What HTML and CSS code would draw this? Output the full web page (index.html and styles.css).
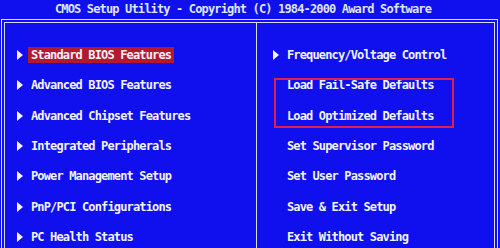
FILE: index.html
```html
<!DOCTYPE html>
<html>
<head>
    <meta charset="UTF-8">
    <title>CMOS Setup Utility</title>
    <link rel="stylesheet" href="styles.css">
</head>
<body>
    <div class="title">CMOS Setup Utility - Copyright (C) 1984-2000 Award Software</div>
    <div class="frame">
        <div class="panel">
            <ul class="menu left">
                <li class="item sub selected"><span class="label">Standard BIOS Features</span></li>
                <li class="item sub"><span class="label">Advanced BIOS Features</span></li>
                <li class="item sub"><span class="label">Advanced Chipset Features</span></li>
                <li class="item sub"><span class="label">Integrated Peripherals</span></li>
                <li class="item sub"><span class="label">Power Management Setup</span></li>
                <li class="item sub"><span class="label">PnP/PCI Configurations</span></li>
                <li class="item sub"><span class="label">PC Health Status</span></li>
            </ul>
            <ul class="menu right">
                <li class="item sub"><span class="label">Frequency/Voltage Control</span></li>
                <li class="item"><span class="label">Load Fail-Safe Defaults</span></li>
                <li class="item"><span class="label">Load Optimized Defaults</span></li>
                <li class="item"><span class="label">Set Supervisor Password</span></li>
                <li class="item"><span class="label">Set User Password</span></li>
                <li class="item"><span class="label">Save &amp; Exit Setup</span></li>
                <li class="item"><span class="label">Exit Without Saving</span></li>
                <li class="mark"></li>
            </ul>
        </div>
    </div>
</body>
</html>
```

FILE: styles.css
```css
body {
    margin: 0;
    padding: 0;
    background: #1010ee;
    color: #f2f2ff;
    font-family: "DejaVu Sans Mono", "Liberation Mono", monospace;
    font-weight: bold;
    font-size: 12px;
    letter-spacing: -0.85px;
    overflow: hidden;
}

.title {
    height: 19px;
    line-height: 19px;
    padding-right: 14px;
    text-align: center;
    color: #dfe4ff;
    white-space: nowrap;
}

.frame {
    width: 497px;
    height: 280px;
    margin-left: 1px;
    box-sizing: border-box;
    border: 1px solid #d6dcff;
    padding: 2px;
}

.panel {
    height: 100%;
    box-sizing: border-box;
    border: 1px solid #d6dcff;
    display: grid;
    grid-template-columns: 252px 1fr;
}

.menu {
    list-style: none;
    margin: 0;
    padding: 17px 0 0 0;
}

.menu.left {
    border-right: 1px solid #d6dcff;
    padding-left: 12px;
}

.menu.right {
    position: relative;
    padding-left: 16px;
}

.item {
    display: flex;
    align-items: center;
    height: 30.3px;
    white-space: nowrap;
}

.item::before {
    content: "";
    width: 0;
    height: 0;
    border-top: 5px solid transparent;
    border-bottom: 5px solid transparent;
    border-left: 6px solid transparent;
    margin-right: 5px;
}

.item.sub::before {
    border-left-color: #f4f4ff;
}

.item.selected::before {
    border-left-color: #ffe8ee;
}

.label {
    padding: 0 3px;
    line-height: 16px;
}

.item.selected .label {
    background: #b4182c;
}

.mark {
    position: absolute;
    left: 17px;
    top: 55px;
    width: 180px;
    height: 50px;
    box-sizing: border-box;
    border: 2px solid #e0204c;
}
```
